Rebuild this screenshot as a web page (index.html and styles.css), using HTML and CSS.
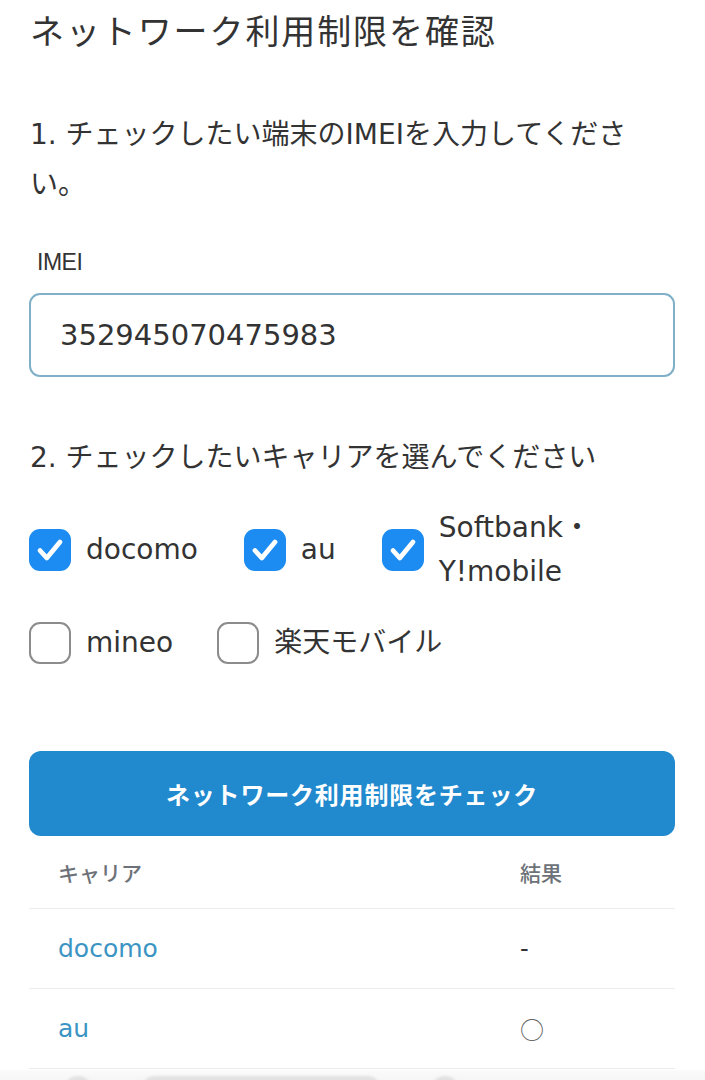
FILE: index.html
```html
<!DOCTYPE html>
<html lang="ja">
<head>
<meta charset="utf-8">
<title>ネットワーク利用制限を確認</title>
<link rel="stylesheet" href="styles.css">
</head>
<body>
<main class="page">
  <h1 class="title">ネットワーク利用制限を確認</h1>

  <p class="step step-1">1. チェックしたい端末のIMEIを入力してください。</p>

  <label class="field-label" for="imei">IMEI</label>
  <div class="input-box" id="imei">352945070475983</div>

  <p class="step step-2">2. チェックしたいキャリアを選んでください</p>

  <div class="check-row row-1">
    <div class="check-item">
      <span class="box checked"><svg viewBox="0 0 42 42" width="42" height="42"><path d="M11 21.5 L17.8 29 L31 13" fill="none" stroke="#fff" stroke-width="4.8" stroke-linecap="round" stroke-linejoin="round"/></svg></span>
      <span class="check-label">docomo</span>
    </div>
    <div class="check-item">
      <span class="box checked"><svg viewBox="0 0 42 42" width="42" height="42"><path d="M11 21.5 L17.8 29 L31 13" fill="none" stroke="#fff" stroke-width="4.8" stroke-linecap="round" stroke-linejoin="round"/></svg></span>
      <span class="check-label">au</span>
    </div>
    <div class="check-item shrink">
      <span class="box checked"><svg viewBox="0 0 42 42" width="42" height="42"><path d="M11 21.5 L17.8 29 L31 13" fill="none" stroke="#fff" stroke-width="4.8" stroke-linecap="round" stroke-linejoin="round"/></svg></span>
      <span class="check-label">Softbank・Y!mobile</span>
    </div>
  </div>

  <div class="check-row row-2">
    <div class="check-item">
      <span class="box"></span>
      <span class="check-label">mineo</span>
    </div>
    <div class="check-item">
      <span class="box"></span>
      <span class="check-label">楽天モバイル</span>
    </div>
  </div>

  <button class="submit" type="button">ネットワーク利用制限をチェック</button>

  <div class="result-table">
    <div class="result-row head">
      <div class="cell">キャリア</div>
      <div class="cell">結果</div>
    </div>
    <div class="result-row">
      <div class="cell carrier">docomo</div>
      <div class="cell">-</div>
    </div>
    <div class="result-row">
      <div class="cell carrier">au</div>
      <div class="cell mark">○</div>
    </div>
  </div>
</main>

<div class="toolbar-peek">
  <span class="peek peek-round"></span>
  <span class="peek peek-pill"></span>
  <span class="peek peek-round"></span>
</div>
</body>
</html>
```

FILE: styles.css
```css
* {
  box-sizing: border-box;
}

html, body {
  margin: 0;
  padding: 0;
  background: #ffffff;
}

body {
  font-family: "DejaVu Sans", "Noto Sans CJK JP", sans-serif;
  color: #333333;
  position: relative;
  min-height: 1080px;
  overflow: hidden;
}

.page {
  padding: 8px 30px 0 29px;
}

.title {
  margin: 0;
  padding-left: 1px;
  font-family: "Noto Sans CJK JP", sans-serif;
  font-size: 34px;
  font-weight: 400;
  line-height: 44px;
  letter-spacing: 1.9px;
  color: #333;
}

.step {
  margin: 0;
  font-size: 28px;
  line-height: 50px;
  padding-left: 1px;
  font-family: "DejaVu Sans", "Noto Sans CJK JP", sans-serif;
}

.step-1 {
  margin-top: 58px;
  max-width: 620px;
}

.field-label {
  display: block;
  margin-top: 37px;
  padding-left: 8px;
  font-size: 23px;
  line-height: 30px;
  font-family: "Liberation Sans", sans-serif;
  letter-spacing: -0.5px;
}

.input-box {
  margin-top: 16px;
  height: 84px;
  border: 2px solid #7fb0c8;
  border-radius: 11px;
  padding-left: 29px;
  display: flex;
  align-items: center;
  font-size: 29px;
  color: #333;
}

.step-2 {
  margin-top: 56px;
}

.check-row {
  display: flex;
  align-items: center;
  gap: 46px;
}

.row-1 {
  margin-top: 23px;
}

.row-2 {
  margin-top: 27px;
  gap: 44px;
}

.check-item {
  display: flex;
  align-items: center;
  gap: 15px;
  flex-shrink: 0;
}

.check-item.shrink {
  flex-shrink: 1;
  min-width: 0;
}

.check-label {
  font-size: 28px;
  line-height: 44px;
}

.box {
  width: 42px;
  height: 42px;
  flex: 0 0 42px;
  border-radius: 11px;
  border: 2px solid #8c8c8c;
  background: #fff;
  display: block;
}

.box.checked {
  border: none;
  background: #1c8cf2;
}

.box svg {
  display: block;
}

.submit {
  display: block;
  width: 100%;
  margin-top: 86px;
  height: 85px;
  border: none;
  border-radius: 12px;
  background: #2189cd;
  color: #ffffff;
  font-family: "Noto Sans CJK JP", sans-serif;
  font-size: 24px;
  font-weight: 700;
  letter-spacing: 0.8px;
  padding: 0;
}

.result-row {
  display: grid;
  grid-template-columns: 491px 1fr;
  align-items: center;
  height: 80px;
  border-bottom: 1.5px solid #ececec;
}

.result-row.head {
  height: 73px;
}

.cell {
  padding-left: 29px;
  font-size: 24px;
}

.cell:last-child {
  padding-left: 0;
}

.head .cell {
  font-family: "Noto Sans CJK JP", sans-serif;
  font-size: 21px;
  font-weight: 500;
  color: #6d7278;
}

.carrier {
  color: #3b94c3;
  font-size: 25px;
}

.mark {
  font-family: "Noto Sans CJK JP", sans-serif;
  font-size: 24px;
  color: #666;
  padding-left: 0;
}

.toolbar-peek {
  position: absolute;
  left: 0;
  right: 0;
  top: 1070px;
  height: 10px;
  background: linear-gradient(#fbfbfb, #f6f6f6);
}

.peek {
  position: absolute;
  top: 6px;
  height: 30px;
  background: #e2e2e2;
  border-radius: 15px;
  filter: blur(1px);
}

.peek-round:first-child {
  left: 64px;
  width: 28px;
}

.peek-pill {
  left: 140px;
  width: 242px;
}

.peek-round:last-child {
  left: 431px;
  width: 28px;
}
```
